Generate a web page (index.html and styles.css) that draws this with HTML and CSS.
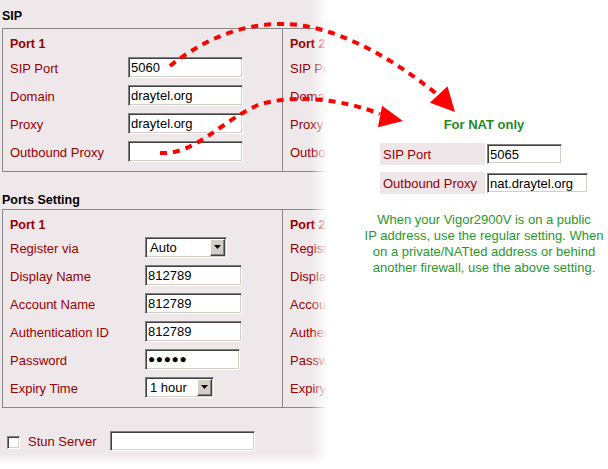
FILE: index.html
```html
<!DOCTYPE html>
<html lang="en">
<head>
    <meta charset="UTF-8">
    <title>SIP Settings - For NAT only</title>
    <link rel="stylesheet" href="styles.css">
</head>
<body>
<div class="page">
    <div class="settings">
        <h2 class="section-title">SIP</h2>
        <div class="group">
            <div class="port sip">
                <h3>Port 1</h3>
                <div class="row"><label>SIP Port</label><input type="text" class="w115" value="5060"></div>
                <div class="row"><label>Domain</label><input type="text" class="w115" value="draytel.org"></div>
                <div class="row"><label>Proxy</label><input type="text" class="w115" value="draytel.org"></div>
                <div class="row"><label>Outbound Proxy</label><input type="text" class="w115" value=""></div>
            </div>
            <div class="port sip">
                <h3>Port 2</h3>
                <div class="row"><label>SIP Port</label></div>
                <div class="row"><label>Domain</label></div>
                <div class="row"><label>Proxy</label></div>
                <div class="row"><label>Outbound Proxy</label></div>
            </div>
        </div>

        <h2 class="section-title ports-title">Ports Setting</h2>
        <div class="group">
            <div class="port ports">
                <h3>Port 1</h3>
                <div class="row"><label>Register via</label>
                    <div class="dropdown w82"><span class="value">Auto</span><span class="drop-btn"><svg width="7" height="4"><polygon points="0,0 7,0 3.5,4"/></svg></span></div>
                </div>
                <div class="row"><label>Display Name</label><input type="text" class="w97" value="812789"></div>
                <div class="row"><label>Account Name</label><input type="text" class="w97" value="812789"></div>
                <div class="row"><label>Authentication ID</label><input type="text" class="w97" value="812789"></div>
                <div class="row"><label>Password</label><input type="text" class="w95 pw" value="●●●●●"></div>
                <div class="row"><label>Expiry Time</label>
                    <div class="dropdown w69"><span class="value">1 hour</span><span class="drop-btn"><svg width="7" height="4"><polygon points="0,0 7,0 3.5,4"/></svg></span></div>
                </div>
            </div>
            <div class="port ports">
                <h3>Port 2</h3>
                <div class="row"><label>Register via</label></div>
                <div class="row"><label>Display Name</label></div>
                <div class="row"><label>Account Name</label></div>
                <div class="row"><label>Authentication ID</label></div>
                <div class="row"><label>Password</label></div>
                <div class="row"><label>Expiry Time</label></div>
            </div>
        </div>

        <div class="stun">
            <span class="checkbox"></span>
            <label>Stun Server</label>
            <input type="text" class="w145" value="">
        </div>
    </div>

    <div class="nat">
        <h3 class="nat-title">For NAT only</h3>
        <div class="nat-table">
            <div class="nat-row"><span class="nat-label">SIP Port</span><input type="text" class="w75" value="5065"></div>
            <div class="nat-row"><span class="nat-label">Outbound Proxy</span><input type="text" class="w100" value="nat.draytel.org"></div>
        </div>
        <p class="nat-note">When your Vigor2900V is on a public<br>IP address, use the regular setting. When<br>on a private/NATted address or behind<br>another firewall, use the above setting.</p>
    </div>

    <!-- red dotted arrows from the port fields to the NAT box -->
    <svg class="arrows" width="608" height="469" viewBox="0 0 608 469">
        <path d="M170,66 C205,38 245,23 285,24 C330,25 385,52 438,95" />
        <polygon points="455,112 429.9,102.7 447.5,86.3" />
        <path d="M160,153 C195,155 220,122 258,105 C295,93 345,100 380,114" />
        <polygon points="403,121 382.1,105.7 377.9,127.3" />
    </svg>
</div>
</body>
</html>
```

FILE: styles.css
```css
body {
    margin: 0;
    background: #fff;
    font-family: "Liberation Sans", Arial, sans-serif;
    font-size: 13px;
}
.page {
    display: flex;
    width: 608px;
    height: 469px;
    position: relative;
    overflow: hidden;
}
.settings {
    position: relative;
    width: 330px;
    flex-shrink: 0;
    padding: 9px 0 0 2px;
    box-sizing: border-box;
    background: #eee8eb;
    overflow: hidden;
}
/* fade the panel out to the right and at the bottom */
.settings::after {
    content: "";
    position: absolute;
    left: 0;
    top: 0;
    right: 0;
    bottom: 0;
    background:
        linear-gradient(to right, rgba(255,255,255,0) 311px, #fff 327px),
        linear-gradient(to bottom, rgba(255,255,255,0) 454px, #fff 465px);
}
.section-title {
    margin: 0 0 4px 0;
    font-size: 12.5px;
    line-height: 15px;
    font-weight: bold;
    color: #000;
}
.ports-title {
    margin: 21px 0 1px 0;
}
.group {
    display: flex;
    width: 380px;
    border-top: 1px solid #878787;
    border-bottom: 1px solid #878787;
    border-left: 1px solid #878787;
}
.port {
    padding: 8px 0 6px 7px;
    box-sizing: border-box;
}
.port:first-child {
    width: 280px;
    border-right: 1px solid #878787;
    flex-shrink: 0;
}
.port h3 {
    margin: 0;
    font-size: 12.5px;
    line-height: 15px;
    font-weight: bold;
    color: #990000;
}
.sip h3 {
    margin-bottom: 1px;
}
.row {
    display: grid;
    height: 28px;
    align-items: center;
}
.sip .row {
    grid-template-columns: 118px auto;
}
.ports .row {
    grid-template-columns: 135px auto;
}
label {
    color: #990000;
    line-height: 16px;
    padding-top: 3px;
    white-space: nowrap;
}
input, .dropdown {
    box-sizing: border-box;
    height: 21px;
    padding: 0 2px;
    font-family: "Liberation Sans", Arial, sans-serif;
    font-size: 13px;
    color: #000;
    background: #fff;
    border: 1px solid;
    border-color: #808080 #fff #fff #808080;
    box-shadow: inset 1px 1px 0 #404040, inset -1px -1px 0 #d4d0c8;
    outline: none;
}
.pw {
    font-size: 12px;
    letter-spacing: 0.6px;
}
.w115 { width: 115px; }
.w97 { width: 97px; }
.w95 { width: 95px; }
.w145 { width: 145px; height: 20px; }
.w75 { width: 75px; height: 20px; }
.w100 { width: 101px; height: 20px; }
.w82 { width: 82px; }
.w69 { width: 69px; }
.dropdown {
    display: flex;
    align-items: center;
    padding: 1px;
}
.dropdown .value {
    flex: 1;
    padding-left: 3px;
    line-height: 17px;
}
.drop-btn {
    display: flex;
    align-items: center;
    justify-content: center;
    width: 15px;
    height: 17px;
    box-sizing: border-box;
    background: #d4d0c8;
    border: 1px solid;
    border-color: #fff #404040 #404040 #fff;
    box-shadow: inset -1px -1px 0 #808080;
}
.drop-btn svg {
    display: block;
    fill: #000;
}
.stun {
    display: flex;
    align-items: center;
    height: 20px;
    margin-top: 23px;
    padding-left: 5px;
}
.checkbox {
    width: 13px;
    height: 13px;
    box-sizing: border-box;
    background: #fff;
    border: 1px solid;
    border-color: #808080 #fff #fff #808080;
    box-shadow: inset 1px 1px 0 #404040, inset -1px -1px 0 #d4d0c8;
    margin-top: 2px;
}
.stun label {
    width: 82px;
    margin-left: 8px;
    padding-top: 2px;
}
.nat {
    flex: 1;
    padding: 117px 0 0 30px;
    text-align: center;
}
.nat-title {
    margin: 0;
    font-size: 13px;
    line-height: 16px;
    font-weight: bold;
    color: #1f8a1f;
}
.nat-table {
    display: inline-flex;
    flex-direction: column;
    gap: 7px;
    margin-top: 10px;
    text-align: left;
}
.nat-row {
    display: flex;
    align-items: center;
    gap: 2px;
    height: 22px;
}
.nat-label {
    width: 105px;
    height: 22px;
    line-height: 23px;
    padding-left: 3px;
    box-sizing: border-box;
    background: #efe6ea;
    color: #990000;
}
.nat-note {
    margin: 18px 0 0 0;
    line-height: 16px;
    color: #2a962a;
    white-space: nowrap;
}
.arrows {
    position: absolute;
    left: 0;
    top: 0;
    z-index: 2;
    pointer-events: none;
}
.arrows path {
    fill: none;
    stroke: #ff0000;
    stroke-width: 4;
    stroke-dasharray: 7 6;
}
.arrows polygon {
    fill: #ff0000;
}
```
